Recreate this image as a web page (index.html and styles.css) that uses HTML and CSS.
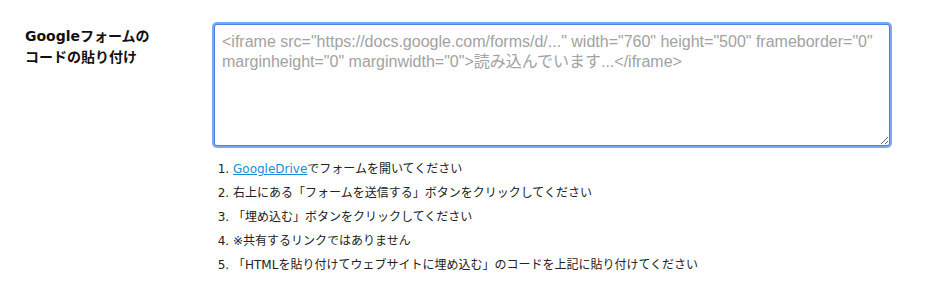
FILE: index.html
```html
<!DOCTYPE html>
<html lang="ja">
<head>
<meta charset="utf-8">
<link rel="stylesheet" href="styles.css">
</head>
<body>
<div class="field">
  <div class="label">Googleフォームの<br>コードの貼り付け</div>
  <div class="control">
    <textarea class="code" placeholder='<iframe src="https://docs.google.com/forms/d/..." width="760" height="500" frameborder="0" marginheight="0" marginwidth="0">読み込んでいます...</iframe>'></textarea>
    <ol class="steps">
      <li><a href="#" class="link">GoogleDrive</a>でフォームを開いてください</li>
      <li>右上にある「フォームを送信する」ボタンをクリックしてください</li>
      <li>「埋め込む」ボタンをクリックしてください</li>
      <li>※共有するリンクではありません</li>
      <li>「HTMLを貼り付けてウェブサイトに埋め込む」のコードを上記に貼り付けてください</li>
    </ol>
  </div>
</div>
</body>
</html>
```

FILE: styles.css
```css
html, body {
  margin: 0;
  padding: 0;
  background: #ffffff;
}

.field {
  display: flex;
  padding: 24px 0 0 25px;
}

.label {
  width: 189px;
  flex: none;
  padding-top: 2px;
  font-family: "DejaVu Sans", "Noto Sans CJK JP", sans-serif;
  font-weight: bold;
  font-size: 14px;
  line-height: 21px;
  color: #111111;
}

.control {
  display: flex;
  flex-direction: column;
}

.code {
  display: block;
  box-sizing: border-box;
  width: 676px;
  height: 122px;
  margin: 0;
  padding: 7px 7px;
  border: 1px solid #4a82ea;
  border-radius: 3px;
  box-shadow: 0 0 0 2px rgba(92, 143, 240, 0.8);
  outline: none;
  font-family: "Liberation Sans", "Noto Sans CJK JP", sans-serif;
  font-size: 16px;
  line-height: 20px;
  color: #333333;
  resize: vertical;
}

.code::placeholder {
  color: #a2a2a2;
  opacity: 1;
}

.steps {
  margin: 11px 0 0 0;
  padding: 0 0 0 19px;
  font-family: "DejaVu Sans", "Noto Sans CJK JP", sans-serif;
  font-size: 12px;
  line-height: 24px;
  color: #222222;
}

.link {
  color: #1a8dd8;
  text-decoration: underline;
}
```
